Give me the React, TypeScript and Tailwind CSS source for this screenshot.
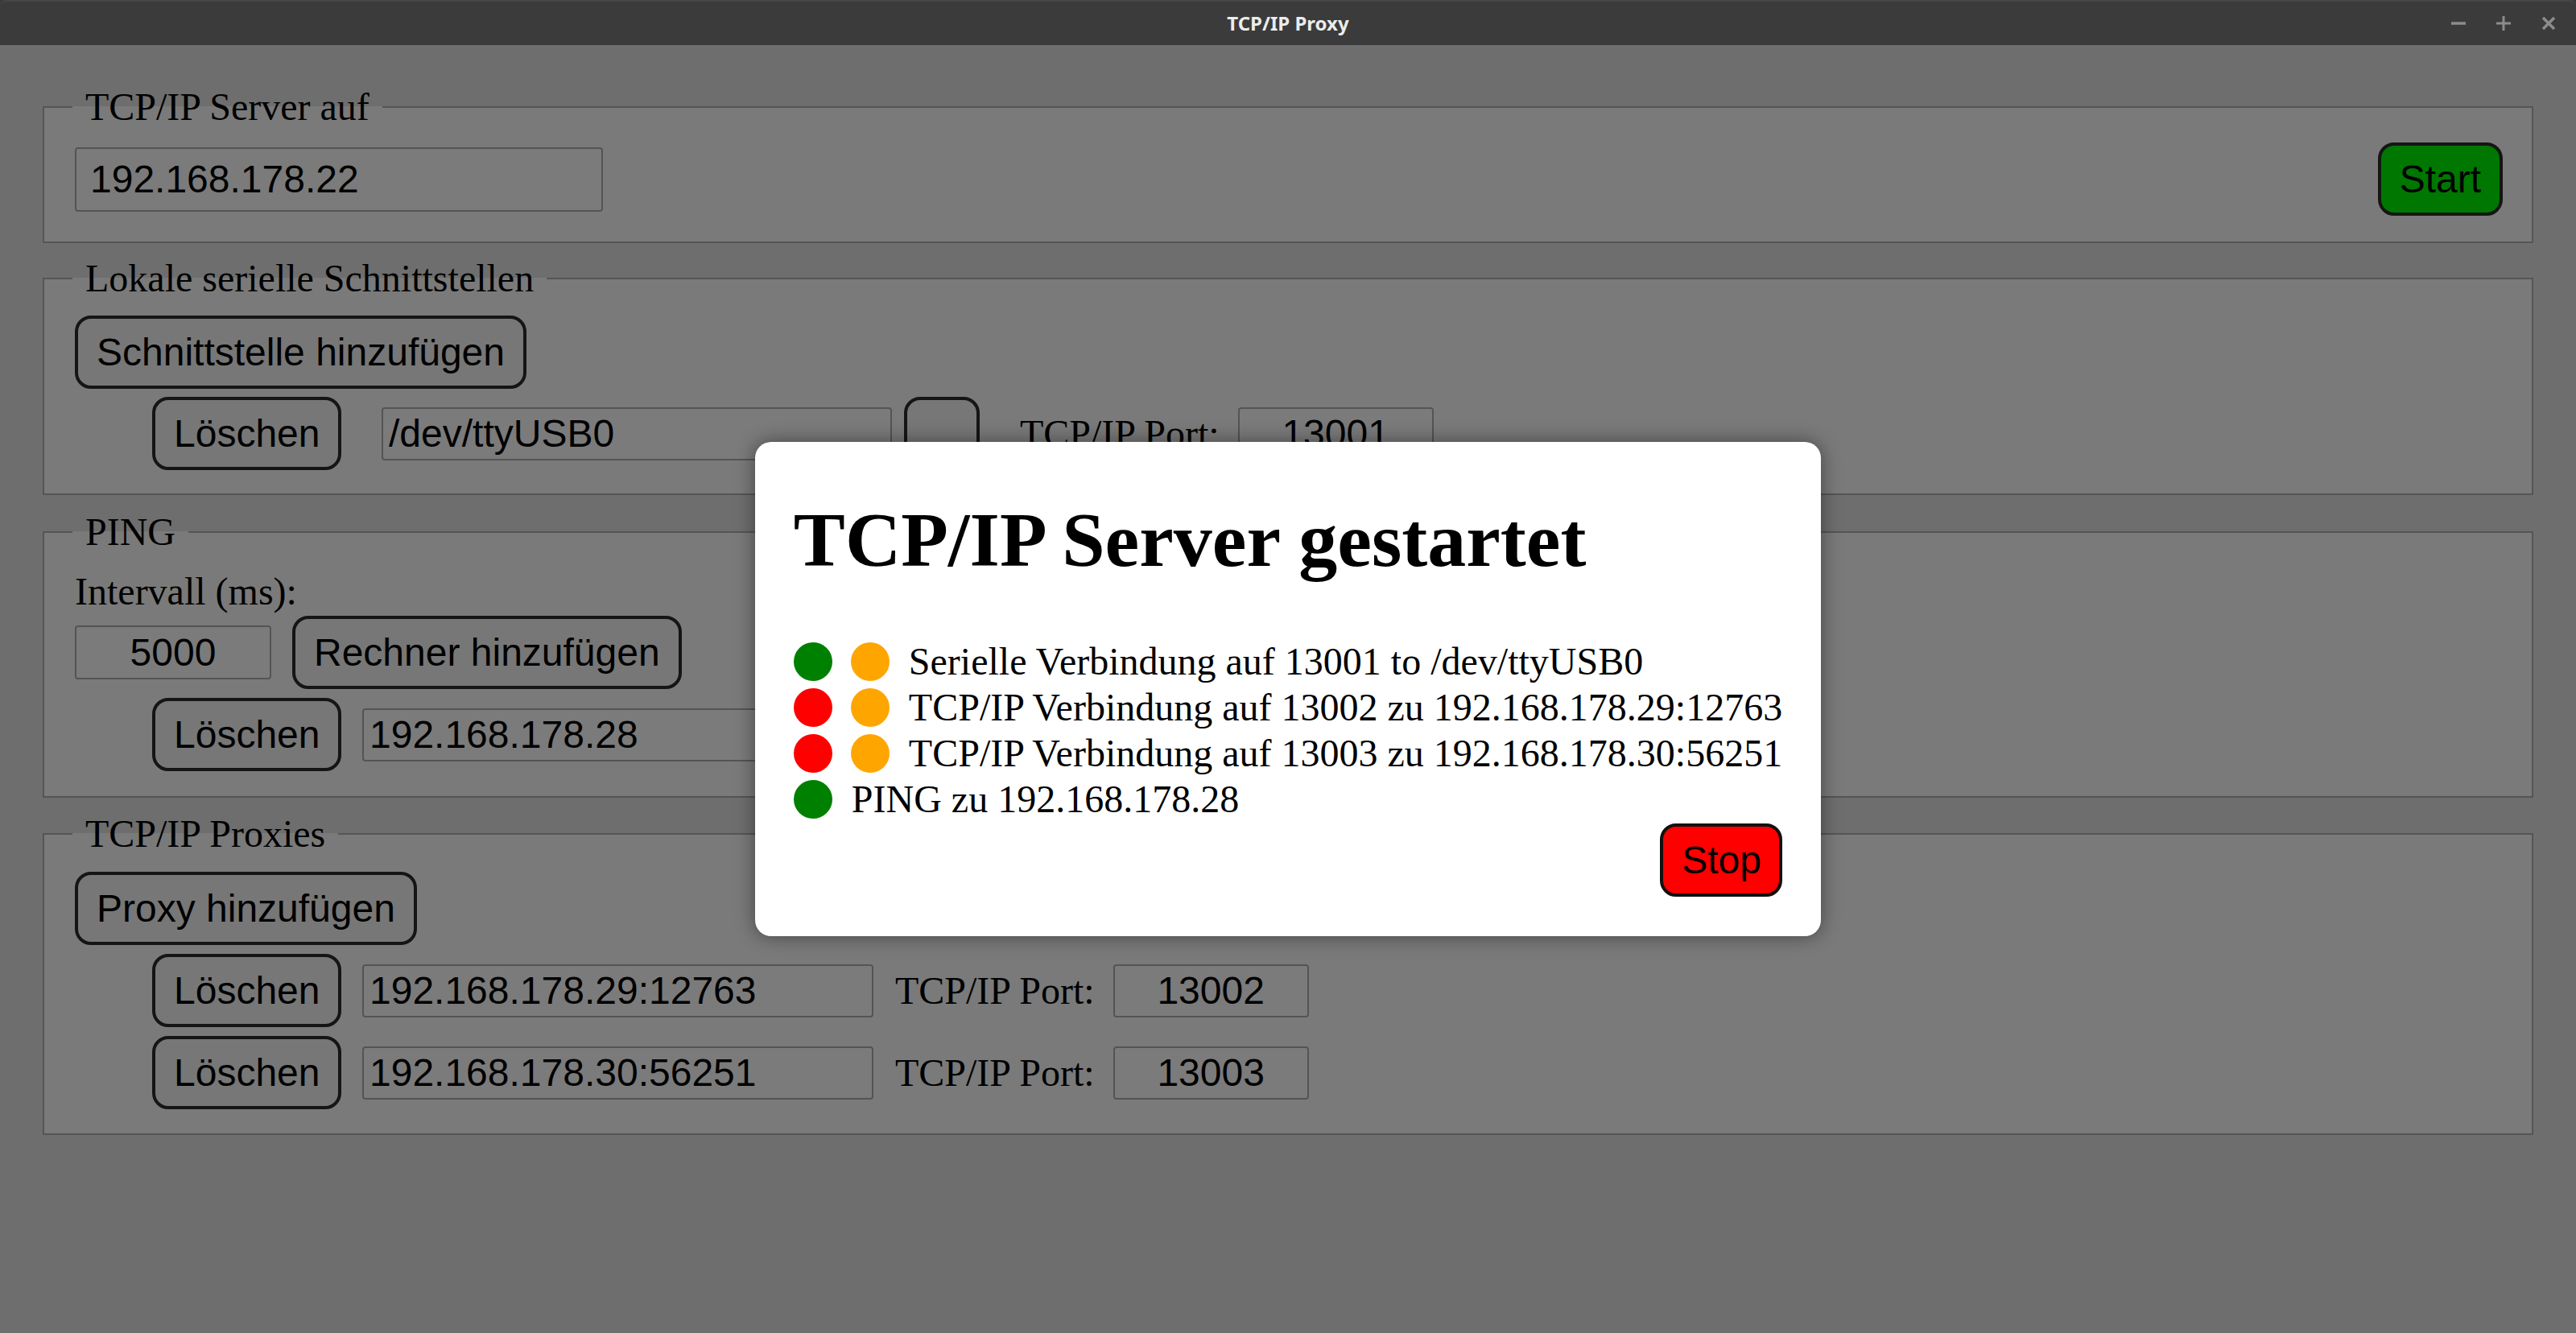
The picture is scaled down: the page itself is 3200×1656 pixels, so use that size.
import type { ReactNode } from "react";

function Btn({
  children,
  className = "",
  bg = "bg-[#efefef]",
}: {
  children?: ReactNode;
  className?: string;
  bg?: string;
}) {
  return (
    <button
      className={`my-[2px] h-[91px] shrink-0 rounded-[20px] border-4 border-[#2a2a2a] px-[23px] font-['Liberation_Sans',Arial,sans-serif] text-[48px] leading-[55px] text-black ${bg} ${className}`}
    >
      {children}
    </button>
  );
}

function Field({ value, className = "" }: { value: string; className?: string }) {
  return (
    <input
      readOnly
      value={value}
      className={`h-[66px] shrink-0 rounded-[4px] border-2 border-[#a8a8a8] bg-[#f7f7f7] px-[7px] font-['Liberation_Sans',Arial,sans-serif] text-[48px] text-black outline-none ${className}`}
    />
  );
}

function Label({ children, className = "" }: { children: ReactNode; className?: string }) {
  return (
    <span className={`shrink-0 font-['Liberation_Serif','Times_New_Roman',serif] text-[48px] leading-[55px] text-black ${className}`}>
      {children}
    </span>
  );
}

function Box({ title, children, className = "" }: { title: string; children: ReactNode; className?: string }) {
  return (
    <fieldset className={`min-w-0 border-2 border-[#ababab] bg-[#f4f4f4] pr-[36px] pl-[35px] ${className}`}>
      <legend className="px-[16px] font-['Liberation_Serif','Times_New_Roman',serif] text-[48px] leading-[55px] text-black">
        {title}
      </legend>
      <div className="pl-[3px]">{children}</div>
    </fieldset>
  );
}

function Dot({ color }: { color: string }) {
  return <span className={`h-[48px] w-[48px] shrink-0 rounded-full ${color}`} />;
}

const rows = [
  { dots: ["bg-[#008000]", "bg-[#ffa500]"], text: "Serielle Verbindung auf 13001 to /dev/ttyUSB0" },
  { dots: ["bg-[#ff0000]", "bg-[#ffa500]"], text: "TCP/IP Verbindung auf 13002 zu 192.168.178.29:12763" },
  { dots: ["bg-[#ff0000]", "bg-[#ffa500]"], text: "TCP/IP Verbindung auf 13003 zu 192.168.178.30:56251" },
  { dots: ["bg-[#008000]"], text: "PING zu 192.168.178.28" },
];

const proxies = [
  { addr: "192.168.178.29:12763", port: "13002" },
  { addr: "192.168.178.30:56251", port: "13003" },
];

export default function App() {
  return (
    <div className="flex h-[1656px] w-[3200px] flex-col overflow-hidden bg-[#3a3a3a]">
      {/* window title bar */}
      <div className="grid h-[56px] shrink-0 grid-cols-[1fr_auto_1fr] items-center rounded-t-[8px] border-t-2 border-[#474747] bg-[#3b3b3b]">
        <div />
        <span className="font-['Noto_Sans',sans-serif] text-[24px] font-bold text-[#ececec]">TCP/IP Proxy</span>
        <div className="flex items-center justify-end gap-[38px] pr-[25px] text-[#8c8c8c]">
          <svg width="18" height="18" viewBox="0 0 18 18" stroke="currentColor" strokeWidth="3.5">
            <path d="M0 9h18" />
          </svg>
          <svg width="18" height="18" viewBox="0 0 18 18" stroke="currentColor" strokeWidth="3">
            <path d="M0 9h18M9 0v18" />
          </svg>
          <svg width="18" height="18" viewBox="0 0 18 18" stroke="currentColor" strokeWidth="3.5">
            <path d="M2 2l14 14M16 2L2 16" />
          </svg>
        </div>
      </div>

      <div className="relative flex-1 bg-[#dcdcdc] px-[53px] pt-[49px]">
        <Box title="TCP/IP Server auf" className="pt-[15px] pb-[30px]">
          <div className="flex items-center justify-between">
            <Field value="192.168.178.22" className="h-[80px] w-[656px] px-[17px]" />
            <Btn bg="bg-[#00ee00]">Start</Btn>
          </div>
        </Box>

        <Box title="Lokale serielle Schnittstellen" className="mt-[16px] pt-[17px] pb-[27px]">
          <div className="flex">
            <Btn>Schnittstelle hinzufügen</Btn>
          </div>
          <div className="mt-[6px] flex items-center pl-[96px]">
            <Btn className="w-[235px]">Löschen</Btn>
            <Field value="/dev/ttyUSB0" className="ml-[50px] w-[634px] px-[5px]" />
            <Btn className="ml-[15px] w-[94px]" />
            <Label className="ml-[50px]">TCP/IP Port:</Label>
            <Field value="13001" className="ml-[23px] w-[243px] text-center" />
          </div>
        </Box>

        <Box title="PING" className="mt-[18px] pt-[18px] pb-[29px]">
          <div className="h-[57px]">
            <Label className="leading-[57px]">Intervall (ms):</Label>
          </div>
          <div className="flex items-center">
            <Field value="5000" className="h-[67px] w-[244px] text-center" />
            <Btn className="ml-[26px]">Rechner hinzufügen</Btn>
          </div>
          <div className="mt-[7px] flex items-center pl-[96px]">
            <Btn className="w-[235px]">Löschen</Btn>
            <Field value="192.168.178.28" className="ml-[26px] w-[635px]" />
          </div>
        </Box>

        <Box title="TCP/IP Proxies" className="mt-[17px] pt-[18px] pb-[28px]">
          <div className="flex">
            <Btn>Proxy hinzufügen</Btn>
          </div>
          {proxies.map((p) => (
            <div key={p.port} className="mt-[7px] flex items-center pl-[96px]">
              <Btn className="w-[235px]">Löschen</Btn>
              <Field value={p.addr} className="ml-[26px] w-[635px]" />
              <Label className="ml-[27px]">TCP/IP Port:</Label>
              <Field value={p.port} className="ml-[23px] w-[243px] text-center" />
            </div>
          ))}
        </Box>

        {/* modal */}
        <div className="absolute inset-0 flex items-center justify-center bg-black/50">
          <div className="flex flex-col rounded-[20px] bg-white px-[48px] pt-[48px] pb-[47px] shadow-[0_0_24px_rgba(0,0,0,0.45)]">
            <h1 className="mt-[19px] font-['Liberation_Serif','Times_New_Roman',serif] text-[96px] leading-[110px] font-bold text-black">
              TCP/IP Server gestartet
            </h1>
            <div className="mt-[67px] flex flex-col">
              {rows.map((r) => (
                <div key={r.text} className="flex h-[57px] items-center gap-[23px]">
                  {r.dots.map((d, i) => (
                    <Dot key={i} color={d} />
                  ))}
                  <span className="ml-[1px] font-['Liberation_Serif','Times_New_Roman',serif] text-[48px] leading-[57px] whitespace-nowrap text-black">
                    {r.text}
                  </span>
                </div>
              ))}
            </div>
            <div className="flex justify-end">
              <Btn bg="bg-[#ff0000]" className="w-[152px] rounded-[18px] border-[#111111] px-0">
                Stop
              </Btn>
            </div>
          </div>
        </div>
      </div>
    </div>
  );
}
